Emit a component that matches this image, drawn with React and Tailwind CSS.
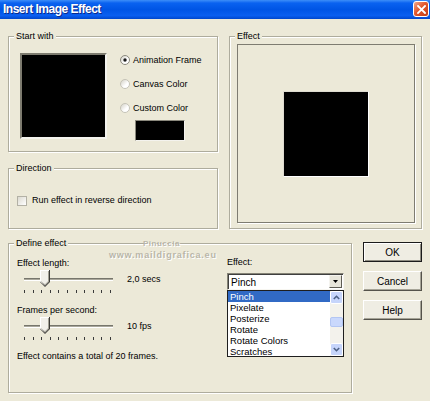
import React from "react";

// ---- small drawn controls ----
function Radio({ checked }) {
  return (
    <svg width="10" height="10" viewBox="0 0 10 10" className="shrink-0">
      <defs>
        <linearGradient id={checked ? "rg1" : "rg0"} x1="0" y1="0" x2="1" y2="1">
          <stop offset="0" stopColor="#cfcdc2" />
          <stop offset="0.6" stopColor="#ffffff" />
        </linearGradient>
      </defs>
      <circle cx="5" cy="5" r="4.5" fill={`url(#${checked ? "rg1" : "rg0"})`} stroke={checked ? "#8c8a7e" : "#c4c2b6"} strokeWidth="1" />
      {checked && <circle cx="5" cy="5" r="1.7" fill="#1a1a1a" />}
    </svg>
  );
}

function Slider({ thumb }) {
  const ticks = Array.from({ length: 11 }, (_, i) => 7 + i * 8.6);
  return (
    <svg width="100" height="24" viewBox="0 0 100 24" className="shrink-0">
      <rect x="7" y="8" width="89" height="1" fill="#77766c" />
      <rect x="7" y="9" width="89" height="1" fill="#a9a79b" />
      <rect x="7" y="10" width="89" height="1" fill="#ffffff" />
      {ticks.map((x, i) => (
        <rect key={i} x={Math.round(x)} y="20" width="1" height="3" fill="#3a3a3a" />
      ))}
      <g transform={`translate(${thumb},0)`}>
        <polygon points="0,0 10,0 10,12 5,17 0,12" fill="#3c3c38" />
        <polygon points="0,0 9,0 9,11.6 5,15.6 0,11.6" fill="#ffffff" />
        <polygon points="1,1 9,1 9,11.6 5,15.6 1,11.6" fill="#a3a195" />
        <polygon points="1,1 8,1 8,11.2 5,14.2 1,11.2" fill="#f1f0ea" />
      </g>
    </svg>
  );
}

function Chevron({ up }) {
  return (
    <svg width="7" height="5" viewBox="0 0 7 5">
      <polyline
        points={up ? "0.8,4 3.5,1.3 6.2,4" : "0.8,1 3.5,3.7 6.2,1"}
        fill="none"
        stroke="#4d6185"
        strokeWidth="1.6"
      />
    </svg>
  );
}

function Group({ label, className, children }) {
  return (
    <div
      className={`relative box-border border border-[#aeac9d] shadow-[inset_1px_1px_0_#fff,1px_1px_0_#fff] ${className}`}
    >
      <span className="absolute left-[5px] top-[-6px] bg-[#ece9d8] px-[2px] leading-[11px] whitespace-nowrap">
        {label}
      </span>
      {children}
    </div>
  );
}

const effects = ["Pinch", "Pixelate", "Posterize", "Rotate", "Rotate Colors", "Scratches"];

export default function App() {
  return (
    <div className="w-[430px] h-[401px] overflow-hidden bg-[#ece9d8] font-['Liberation_Sans',Arial,sans-serif] text-[9px] text-black">
      {/* title bar */}
      <div className="flex h-[19px] items-start bg-[linear-gradient(to_bottom,#3d8ef8_0%,#0a62f0_16%,#0055e5_50%,#0a5ff0_82%,#0047cc_100%)]">
        <span className="pl-[3px] pt-[2px] text-[12px] font-bold leading-[15px] tracking-[-0.5px] text-white [text-shadow:1px_1px_0_#0b2a8a]">
          Insert Image Effect
        </span>
        <div className="ml-auto mr-[1px] mt-[1px] flex h-[16px] w-[16px] items-center justify-center rounded-[3px] border border-white bg-[linear-gradient(135deg,#f0a88c_0%,#e2582e_45%,#c13c16_100%)]">
          <svg width="9" height="9" viewBox="0 0 9 9">
            <path d="M1 1 L8 8 M8 1 L1 8" stroke="#fff" strokeWidth="1.8" strokeLinecap="square" />
          </svg>
        </div>
      </div>

      <div className="px-[8px] pt-[17px]">
        {/* top row */}
        <div className="flex gap-[11px]">
          <div className="flex w-[210px] flex-col gap-[16px]">
            <Group label="Start with" className="h-[116px]">
              <div className="flex pl-[11px] pt-[16px]">
                <div className="h-[86px] w-[87px] border-2 border-t-[#7d7b6f] border-l-[#7d7b6f] border-b-[#f4f3ee] border-r-[#f4f3ee] bg-black" />
                <div className="ml-[13px] mt-[2px] flex flex-col">
                  <div className="flex flex-col gap-[14px]">
                    <div className="flex h-[10px] items-center gap-[3px]">
                      <Radio checked />
                      <span className="leading-[11px]">Animation Frame</span>
                    </div>
                    <div className="flex h-[10px] items-center gap-[3px]">
                      <Radio />
                      <span className="leading-[11px]">Canvas Color</span>
                    </div>
                    <div className="flex h-[10px] items-center gap-[3px]">
                      <Radio />
                      <span className="leading-[11px]">Custom Color</span>
                    </div>
                  </div>
                  <div className="ml-[15px] mt-[7px] h-[21px] w-[50px] border border-t-[#8a887c] border-l-[#8a887c] border-b-[#f4f3ee] border-r-[#f4f3ee] bg-black" />
                </div>
              </div>
            </Group>

            <Group label="Direction" className="h-[61px]">
              <div className="flex items-center gap-[5px] pl-[8px] pt-[26px]">
                <div className="h-[10px] w-[10px] shrink-0 border border-[#b3b1a5] bg-[linear-gradient(135deg,#dcdad0,#ffffff)]" />
                <span className="leading-[11px]">Run effect in reverse direction</span>
              </div>
            </Group>
          </div>

          <Group label="Effect" className="h-[193px] w-[193px]">
            <div className="ml-[7px] mt-[7px] flex h-[179px] w-[178px] items-center justify-center border border-[#7e7c71] shadow-[1px_1px_0_#fff]">
              <div className="h-[86px] w-[86px] border border-[#dedbd0] border-b-white border-r-white bg-black bg-clip-content" />
            </div>
          </Group>
        </div>

        {/* bottom row */}
        <div className="mt-[14px] flex gap-[11px]">
          <Group label="Define effect" className="h-[150px] w-[344px]">
            <div className="pointer-events-none absolute left-[134px] top-[-5px] text-[8px] font-bold leading-[9px] tracking-[0.5px] text-[#b9b6a8] [text-shadow:1px_1px_0_#fff]">
              Pinuccia
            </div>
            <div className="pointer-events-none absolute left-[100px] top-[7px] text-[9px] font-bold leading-[9px] tracking-[0.8px] text-[#b9b6a8] [text-shadow:1px_1px_0_#fff]">
              www.maildigrafica.eu
            </div>

            <div className="flex">
              <div className="flex w-[218px] flex-col pl-[8px] pt-[14px]">
                <div className="h-[11px] leading-[11px]">Effect length:</div>
                <div className="mt-[1px] flex items-start">
                  <Slider thumb={23} />
                  <span className="ml-[10px] mt-[4px] leading-[11px]">2,0 secs</span>
                </div>
                <div className="mt-[11px] h-[11px] leading-[11px]">Frames per second:</div>
                <div className="mt-[1px] flex items-start">
                  <Slider thumb={23} />
                  <span className="ml-[10px] mt-[4px] leading-[11px]">10 fps</span>
                </div>
                <div className="mt-[10px] h-[11px] leading-[11px] whitespace-nowrap">
                  Effect contains a total of 20 frames.
                </div>
              </div>

              <div className="flex flex-col pt-[13px]">
                <div className="h-[11px] leading-[11px]">Effect:</div>
                {/* combo */}
                <div className="mt-[5px] flex h-[17px] w-[117px] items-center border border-t-[#858376] border-l-[#858376] border-b-[#f7f6f1] border-r-[#f7f6f1] bg-white shadow-[inset_1px_1px_0_#3f3f3f]">
                  <span className="flex-1 pl-[3px] pt-[1px] text-[10px] leading-[11px]">Pinch</span>
                  <div className="mr-[1px] flex h-[13px] w-[13px] items-center justify-center border border-t-[#f4f3ee] border-l-[#f4f3ee] border-b-[#5e5c53] border-r-[#5e5c53] bg-[#e7e5da]">
                    <svg width="5" height="3" viewBox="0 0 5 3">
                      <polygon points="0,0 5,0 2.5,3" fill="#000" />
                    </svg>
                  </div>
                </div>
                {/* list */}
                <div className="flex h-[67px] w-[117px] overflow-hidden border border-[#1e1e1e] bg-white">
                  <div className="flex flex-1 flex-col">
                    {effects.map((e, i) => (
                      <div
                        key={e}
                        className={`h-[11px] shrink-0 pl-[2px] text-[9.5px] leading-[11px] ${
                          i === 0 ? "bg-[#316ac5] text-white" : ""
                        }`}
                      >
                        {e}
                      </div>
                    ))}
                  </div>
                  <div className="flex w-[13px] flex-col bg-[#f3f2ec]">
                    <div className="flex h-[13px] items-center justify-center rounded-[2px] border border-white bg-[#c6d5fb]">
                      <Chevron up />
                    </div>
                    <div className="flex flex-1 flex-col pt-[13px]">
                      <div className="h-[10px] rounded-[2px] border border-[#b3c6f3] bg-[#c9d8fc]" />
                    </div>
                    <div className="flex h-[13px] items-center justify-center rounded-[2px] border border-white bg-[#c6d5fb]">
                      <Chevron />
                    </div>
                  </div>
                </div>
              </div>
            </div>
          </Group>

          <div className="-mt-[1px] flex w-[59px] flex-col gap-[9px] text-[10px]">
            <div className="flex h-[20px] items-center justify-center border border-[#1b1b1b] bg-[#efede3] shadow-[inset_1px_1px_0_#fff,inset_-1px_-1px_0_#8e8c80] leading-[11px]">
              OK
            </div>
            <div className="flex h-[20px] items-center justify-center border border-t-white border-l-white border-b-[#55534b] border-r-[#55534b] bg-[#efede3] shadow-[inset_-1px_-1px_0_#a6a497] leading-[11px]">
              Cancel
            </div>
            <div className="flex h-[20px] items-center justify-center border border-t-white border-l-white border-b-[#55534b] border-r-[#55534b] bg-[#efede3] shadow-[inset_-1px_-1px_0_#a6a497] leading-[11px]">
              Help
            </div>
          </div>
        </div>
      </div>
    </div>
  );
}
